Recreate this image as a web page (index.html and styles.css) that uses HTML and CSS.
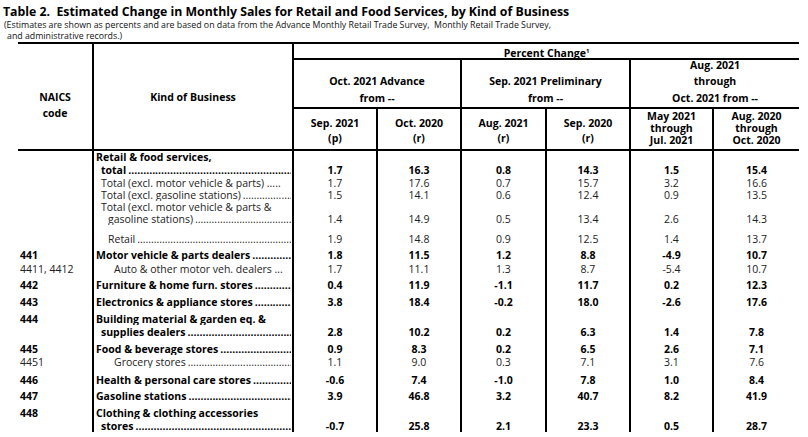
FILE: index.html
```html
<!DOCTYPE html>
<html>
<head>
<meta charset="utf-8">
<title>Table 2</title>
<link rel="stylesheet" href="styles.css">
</head>
<body>
<h1 class="title">Table 2.&nbsp; Estimated Change in Monthly Sales for Retail and Food Services, by Kind of Business</h1>
<p class="note">(Estimates are shown as percents and are based on data from the Advance Monthly Retail Trade Survey,&nbsp; Monthly Retail Trade Survey,<br><span class="note2">and administrative records.)</span></p>
<table class="tbl">
<colgroup>
<col class="c-naics"><col class="c-kind"><col class="c-n1"><col class="c-n2"><col class="c-n3"><col class="c-n4"><col class="c-n5"><col class="c-n6">
</colgroup>
<thead>
<tr class="ha">
<th rowspan="3" class="naics-h"><div class="hn">NAICS<br>code</div></th>
<th rowspan="3" class="kind-h"><div class="hk">Kind of Business</div></th>
<th colspan="6" class="pc"><div class="hpc">Percent Change<sup>1</sup></div></th>
</tr>
<tr class="hb">
<th colspan="2"><div class="hbx">Oct. 2021 Advance<br>from --</div></th>
<th colspan="2"><div class="hbx">Sep. 2021 Preliminary<br>from --</div></th>
<th colspan="2"><div class="hbx three">Aug. 2021<br>through<br>Oct. 2021 from --</div></th>
</tr>
<tr class="hc">
<th><div class="hcx">Sep. 2021<br>(p)</div></th>
<th><div class="hcx">Oct. 2020<br>(r)</div></th>
<th><div class="hcx">Aug. 2021<br>(r)</div></th>
<th><div class="hcx">Sep. 2020<br>(r)</div></th>
<th><div class="hcx three">May 2021<br>through<br>Jul. 2021</div></th>
<th><div class="hcx three">Aug. 2020<br>through<br>Oct. 2020</div></th>
</tr>
</thead>
<tbody>
<tr class="b p1"><td></td><td class="k">Retail &amp; food services,</td><td></td><td></td><td></td><td></td><td></td><td></td></tr>
<tr class="b p2"><td></td><td class="k i1"><div class="ld">total</div></td><td>1.7</td><td>16.3</td><td>0.8</td><td>14.3</td><td>1.5</td><td>15.4</td></tr>
<tr class="n p2"><td></td><td class="k i1">Total (excl. motor vehicle &amp; parts) .....</td><td>1.7</td><td>17.6</td><td>0.7</td><td>15.7</td><td>3.2</td><td>16.6</td></tr>
<tr class="n p1"><td></td><td class="k i1"><div class="ld">Total (excl. gasoline stations)</div></td><td>1.5</td><td>14.1</td><td>0.6</td><td>12.4</td><td>0.9</td><td>13.5</td></tr>
<tr class="n p1"><td></td><td class="k i1">Total (excl. motor vehicle &amp; parts &amp;</td><td></td><td></td><td></td><td></td><td></td><td></td></tr>
<tr class="n p1"><td></td><td class="k i2"><div class="ld">gasoline stations)</div></td><td>1.4</td><td>14.9</td><td>0.5</td><td>13.4</td><td>2.6</td><td>14.3</td></tr>
<tr class="n p9"><td></td><td class="k i2"><div class="ld">Retail</div></td><td>1.9</td><td>14.8</td><td>0.9</td><td>12.5</td><td>1.4</td><td>13.7</td></tr>
<tr class="b p5"><td class="code">441</td><td class="k"><div class="ld">Motor vehicle &amp; parts dealers</div></td><td>1.8</td><td>11.5</td><td>1.2</td><td>8.8</td><td class="neg">-4.9</td><td>10.7</td></tr>
<tr class="n p3"><td class="code">4411, 4412</td><td class="k i3">Auto &amp; other motor veh. dealers ...</td><td>1.7</td><td>11.1</td><td>1.3</td><td>8.7</td><td class="neg">-5.4</td><td>10.7</td></tr>
<tr class="b p5"><td class="code">442</td><td class="k"><div class="ld">Furniture &amp; home furn. stores</div></td><td>0.4</td><td>11.9</td><td>-1.1</td><td>11.7</td><td>0.2</td><td>12.3</td></tr>
<tr class="b p6"><td class="code">443</td><td class="k"><div class="ld">Electronics &amp; appliance stores</div></td><td>3.8</td><td>18.4</td><td>-0.2</td><td>18.0</td><td>-2.6</td><td>17.6</td></tr>
<tr class="b p6"><td class="code">444</td><td class="k">Building material &amp; garden eq. &amp;</td><td></td><td></td><td></td><td></td><td></td><td></td></tr>
<tr class="b p2"><td></td><td class="k i1"><div class="ld">supplies dealers</div></td><td>2.8</td><td>10.2</td><td>0.2</td><td>6.3</td><td>1.4</td><td>7.8</td></tr>
<tr class="b p6"><td class="code">445</td><td class="k"><div class="ld">Food &amp; beverage stores</div></td><td>0.9</td><td>8.3</td><td>0.2</td><td>6.5</td><td>2.6</td><td>7.1</td></tr>
<tr class="n p2"><td class="code">4451</td><td class="k i3"><div class="ld">Grocery stores</div></td><td>1.1</td><td>9.0</td><td>0.3</td><td>7.1</td><td>3.1</td><td>7.6</td></tr>
<tr class="b p7"><td class="code">446</td><td class="k"><div class="ld">Health &amp; personal care stores</div></td><td>-0.6</td><td>7.4</td><td>-1.0</td><td>7.8</td><td>1.0</td><td>8.4</td></tr>
<tr class="b p5"><td class="code">447</td><td class="k"><div class="ld">Gasoline stations</div></td><td>3.9</td><td>46.8</td><td>3.2</td><td>40.7</td><td>8.2</td><td>41.9</td></tr>
<tr class="b p6"><td class="code">448</td><td class="k">Clothing &amp; clothing accessories</td><td></td><td></td><td></td><td></td><td></td><td></td></tr>
<tr class="b p2"><td></td><td class="k i1"><div class="ld">stores</div></td><td>-0.7</td><td>25.8</td><td>2.1</td><td>23.3</td><td>0.5</td><td>28.7</td></tr>
</tbody>
</table>
</body>
</html>
```

FILE: styles.css
```css
html, body {
  margin: 0;
  padding: 0;
  background: #fff;
  color: #000;
  font-family: "Open Sans", "Lato", "Liberation Sans", sans-serif;
}

.title {
  margin: 0;
  padding: 4px 0 0 3px;
  font-size: 12.3px;
  line-height: 16px;
  font-weight: 700;
}

.note {
  margin: 0;
  padding-left: 4px;
  font-size: 8.8px;
  line-height: 11px;
  color: #111;
}

.note2 {
  padding-left: 3px;
}

.tbl {
  margin-left: 18px;
  width: 781px;
  table-layout: fixed;
  border-collapse: collapse;
  border-top: 2px solid #000;
  font-size: 10.5px;
}

.c-naics { width: 75px; }
.c-kind { width: 200px; }
.c-n1 { width: 84px; }
.c-n2 { width: 84px; }
.c-n3 { width: 85px; }
.c-n4 { width: 84px; }
.c-n5 { width: 83px; }
.c-n6 { width: 86px; }

.tbl th {
  font-weight: 700;
  text-align: center;
  padding: 0;
  border-left: 2px solid #000;
  border-bottom: 2px solid #000;
  white-space: nowrap;
  vertical-align: top;
}

.tbl th.naics-h {
  border-left: none;
}

.hn {
  padding-top: 45px;
  line-height: 16px;
}

.hk {
  padding-top: 45px;
  line-height: 16px;
}

.hpc {
  height: 11px;
  padding-top: 3px;
  line-height: 13px;
}

.hpc sup {
  font-size: 6px;
  line-height: 0;
  vertical-align: 4px;
}

.hbx {
  height: 46px;
  display: flex;
  flex-direction: column;
  justify-content: flex-end;
  line-height: 16.5px;
  padding-bottom: 1px;
}

.hbx.three {
  line-height: 16.5px;
}

.hcx {
  height: 37px;
  display: flex;
  flex-direction: column;
  justify-content: flex-end;
  line-height: 15px;
  padding-bottom: 2px;
}

.hcx.three {
  line-height: 12px;
  padding-bottom: 3px;
}

.tbl td {
  padding: 0;
  line-height: 11px;
  height: 11px;
  text-align: center;
  vertical-align: top;
  border-left: 2px solid #000;
  white-space: nowrap;
}

.tbl td:first-child {
  border-left: none;
  text-align: left;
  padding-left: 2px;
}

.tbl td.k {
  text-align: left;
  padding-left: 2px;
  padding-right: 1px;
  overflow: hidden;
}

.tbl td.i1 { padding-left: 7px; }
.tbl td.i2 { padding-left: 14px; }
.tbl td.i3 { padding-left: 20px; }

.ld {
  display: flex;
  white-space: nowrap;
  overflow: hidden;
}

.ld::after {
  content: " ................................................................................................................................";
  flex: 1;
  min-width: 0;
  overflow: hidden;
  padding-left: 2px;
}

.b td { font-weight: 700; color: #000; }
.n td { font-weight: 400; color: #222; }

.p0 td { padding-top: 0; }
.p1 td { padding-top: 1px; }
.p2 td { padding-top: 2px; }
.p3 td { padding-top: 3px; }
.p4 td { padding-top: 4px; }
.p5 td { padding-top: 5px; }
.p6 td { padding-top: 6px; }
.p7 td { padding-top: 7px; }
.p8 td { padding-top: 8px; }
.p9 td { padding-top: 9px; }
```
